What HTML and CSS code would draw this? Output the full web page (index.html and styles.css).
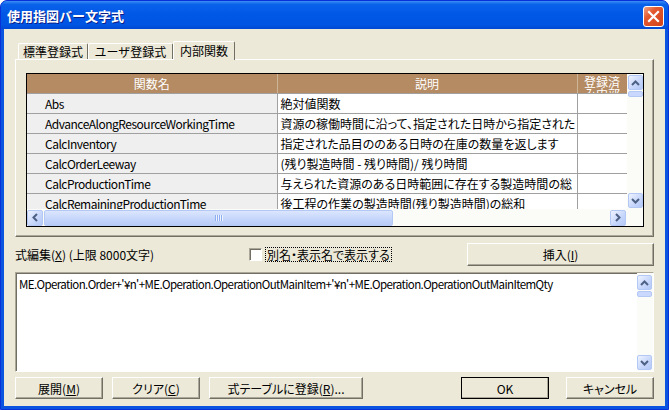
FILE: index.html
```html
<!DOCTYPE html>
<html lang="ja">
<head>
    <meta charset="UTF-8">
    <title>使用指図バー文字式</title>
    <link rel="stylesheet" href="styles.css">
</head>
<body>

<div class="window">
    <div class="titlebar">
        <span class="title">使用指図バー文字式</span>
        <span class="close-btn">
            <svg width="13" height="13" viewBox="0 0 13 13"><path d="M2 2 L11 11 M11 2 L2 11" stroke="#fff" stroke-width="2.2" stroke-linecap="square"/></svg>
        </span>
    </div>

    <div class="client">
        <div class="tabs">
            <div class="tab tab-std">標準登録式</div>
            <div class="tab tab-user">ユーザ登録式</div>
            <div class="tab active">内部関数</div>
        </div>

        <div class="tab-panel">
            <div class="grid">
                <div class="grid-top">
                    <div class="grid-view">
                        <table class="func-table">
                            <colgroup>
                                <col class="c-name">
                                <col class="c-desc">
                                <col class="c-reg">
                            </colgroup>
                            <tr>
                                <th>関数名</th>
                                <th>説明</th>
                                <th class="th-reg"><div class="wrap">登録済み内部</div></th>
                            </tr>
                            <tr><td class="name">Abs</td><td>絶対値関数</td><td></td></tr>
                            <tr><td class="name">AdvanceAlongResourceWorkingTime</td><td>資源の稼働時間に沿って、指定された日時から指定された</td><td></td></tr>
                            <tr><td class="name">CalcInventory</td><td>指定された品目ののある日時の在庫の数量を返します</td><td></td></tr>
                            <tr><td class="name">CalcOrderLeeway</td><td>(残り製造時間 - 残り時間)/ 残り時間</td><td></td></tr>
                            <tr><td class="name">CalcProductionTime</td><td>与えられた資源のある日時範囲に存在する製造時間の総</td><td></td></tr>
                            <tr><td class="name">CalcRemainingProductionTime</td><td>後工程の作業の製造時間(残り製造時間)の総和</td><td></td></tr>
                        </table>
                    </div>
                    <div class="vscroll">
                        <div class="sb-btn"><svg width="9" height="6" viewBox="0 0 9 6"><path d="M1 5 L4.5 1.5 L8 5" fill="none" stroke="#4d6185" stroke-width="2"/></svg></div>
                        <div class="sb-thumb-v"></div>
                        <div class="sb-track"></div>
                        <div class="sb-btn"><svg width="9" height="6" viewBox="0 0 9 6"><path d="M1 1 L4.5 4.5 L8 1" fill="none" stroke="#4d6185" stroke-width="2"/></svg></div>
                    </div>
                </div>
                <div class="hscroll">
                    <div class="sb-btn"><svg width="6" height="9" viewBox="0 0 6 9"><path d="M5 1 L1.5 4.5 L5 8" fill="none" stroke="#4d6185" stroke-width="2"/></svg></div>
                    <div class="sb-thumb-h"><span class="grip"></span></div>
                    <div class="sb-track"></div>
                    <div class="sb-btn"><svg width="6" height="9" viewBox="0 0 6 9"><path d="M1 1 L4.5 4.5 L1 8" fill="none" stroke="#4d6185" stroke-width="2"/></svg></div>
                    <div class="sb-corner"></div>
                </div>
            </div>
        </div>

        <div class="edit-row">
            <span class="edit-label">式編集(<u>X</u>) (上限 8000文字)</span>
            <span class="check"></span>
            <span class="check-label">別名・表示名で表示する</span>
            <span class="btn btn-insert">挿入(<u>I</u>)</span>
        </div>

        <div class="editor">
            <div class="editor-text">ME.Operation.Order+'¥n'+ME.Operation.OperationOutMainItem+'¥n'+ME.Operation.OperationOutMainItemQty</div>
            <div class="vscroll editor-scroll">
                <div class="sb-btn"><svg width="9" height="6" viewBox="0 0 9 6"><path d="M1 5 L4.5 1.5 L8 5" fill="none" stroke="#4d6185" stroke-width="2"/></svg></div>
                <div class="sb-thumb-v"></div>
                <div class="sb-track"></div>
                <div class="sb-btn"><svg width="9" height="6" viewBox="0 0 9 6"><path d="M1 1 L4.5 4.5 L8 1" fill="none" stroke="#4d6185" stroke-width="2"/></svg></div>
            </div>
        </div>

        <div class="button-row">
            <span class="btn btn-small">展開(<u>M</u>)</span>
            <span class="btn btn-small">クリア(<u>C</u>)</span>
            <span class="btn btn-wide">式テーブルに登録(<u>R</u>)...</span>
            <span class="btn btn-small btn-default">OK</span>
            <span class="btn btn-small">キャンセル</span>
        </div>
    </div>
</div>

</body>
</html>
```

FILE: styles.css
```css
body {
    margin: 0;
    padding: 0;
    background: #fff;
    font-family: "Noto Sans CJK JP", sans-serif;
    font-size: 12px;
    font-feature-settings: "palt";
    color: #000;
}
.window {
    width: 669px;
    height: 410px;
    box-sizing: border-box;
    background: #0a54e0;
    border: 1px solid #0831d9;
    border-radius: 7px 7px 0 0;
    overflow: hidden;
    display: flex;
    flex-direction: column;
}
.titlebar {
    height: 28px;
    display: flex;
    align-items: center;
    justify-content: space-between;
    padding: 0 4px 0 6px;
    background: linear-gradient(to bottom, #3d8ef5 0%, #0a62ea 12%, #0058e6 45%, #0055e2 85%, #0049d4 100%);
}
.title {
    color: #fff;
    font-weight: bold;
    font-size: 13px;
    font-feature-settings: normal;
    text-shadow: 1px 1px 0 #0a1e8a;
}
.close-btn {
    width: 19px;
    height: 19px;
    border: 1px solid #fff;
    border-radius: 3px;
    background: linear-gradient(135deg, #f0a487 0%, #e3592f 35%, #d2421a 100%);
    display: flex;
    align-items: center;
    justify-content: center;
    margin-top: 2px;
}
.client {
    margin: 0 3px 3px 3px;
    flex: 1;
    background: #ece9d8;
    padding: 12px 11px 0 11px;
}

/* tabs */
.tabs {
    display: flex;
    align-items: flex-end;
    height: 18px;
    padding-left: 3px;
    position: relative;
    z-index: 1;
}
.tab {
    height: 16px;
    box-sizing: border-box;
    border-top: 1px solid #fff;
    border-left: 1px solid #fff;
    border-right: 1px solid #716f64;
    border-radius: 2px 2px 0 0;
    text-align: center;
    line-height: 14px;
    padding-top: 1px;
    font-feature-settings: normal;
}
.tab-std {
    width: 70px;
}
.tab-user {
    width: 85px;
}
.tab.active {
    width: 62px;
    height: 19px;
    margin-bottom: -1px;
    background: #ece9d8;
    line-height: 15px;
}
.tab-panel {
    height: 178px;
    box-sizing: border-box;
    border-top: 1px solid #fff;
    border-left: 1px solid #fff;
    border-right: 1px solid #716f64;
    border-bottom: 1px solid #716f64;
    box-shadow: inset -1px -1px 0 #aca899;
    padding: 13px 0 0 10px;
}
.grid {
    width: 618px;
    height: 154px;
    box-sizing: border-box;
    border: 1px solid #000;
    background: #fff;
}
.grid-top {
    display: flex;
    height: 135px;
}
.grid-view {
    width: 600px;
    height: 135px;
    overflow: hidden;
}
.func-table {
    border-collapse: collapse;
    table-layout: fixed;
    width: 600px;
}
.c-name {
    width: 250px;
}
.c-desc {
    width: 300px;
}
.c-reg {
    width: 50px;
}
.func-table th {
    height: 19px;
    padding: 0;
    background: #b48b63;
    color: #fff;
    font-weight: normal;
    border-right: 1px solid #cdb597;
    border-bottom: 1px solid #a0a0a0;
    text-align: center;
    line-height: 19px;
}
.th-reg .wrap {
    height: 19px;
    overflow: hidden;
    line-height: 12px;
    padding: 2px 3px 0 3px;
    box-sizing: border-box;
    white-space: normal;
    font-feature-settings: normal;
}
.func-table td {
    height: 19px;
    padding: 0 0 0 3px;
    border-right: 1px solid #a0a0a0;
    border-bottom: 1px solid #a0a0a0;
    white-space: nowrap;
    overflow: hidden;
    line-height: 19px;
    background: #fff;
}
.func-table td.name {
    padding-left: 18px;
    background: #efefef;
    letter-spacing: -0.5px;
}

/* scrollbars */
.vscroll {
    width: 16px;
    display: flex;
    flex-direction: column;
    align-items: center;
    background: #fbfbf8;
    padding: 1px 0;
    box-sizing: border-box;
}
.sb-btn {
    width: 15px;
    height: 15px;
    flex-shrink: 0;
    box-sizing: border-box;
    border: 1px solid #b4c8f6;
    border-radius: 2px;
    background: linear-gradient(135deg, #eef3fe 0%, #c6d6fb 60%, #b4c9f6 100%);
    display: flex;
    align-items: center;
    justify-content: center;
}
.sb-thumb-v {
    width: 15px;
    height: 6px;
    margin-top: 1px;
    box-sizing: border-box;
    border: 1px solid #b4c8f6;
    border-radius: 2px;
    background: #c9d8fc;
}
.sb-track {
    flex: 1;
}
.hscroll {
    height: 17px;
    display: flex;
    align-items: center;
    background: #fbfbf8;
}
.hscroll .sb-btn {
    height: 16px;
    width: 16px;
}
.sb-thumb-h {
    width: 349px;
    height: 16px;
    margin-left: 1px;
    box-sizing: border-box;
    border: 1px solid #b4c8f6;
    border-radius: 2px;
    background: linear-gradient(to bottom, #dce6fd 0%, #c4d5fb 60%, #b8cbf7 100%);
    display: flex;
    align-items: center;
    justify-content: center;
}
.grip {
    width: 8px;
    height: 6px;
    background: repeating-linear-gradient(to right, #8eaef3 0, #8eaef3 1px, #eef3fe 1px, #eef3fe 2px);
}
.sb-corner {
    width: 17px;
    height: 17px;
    background: #fbfbf8;
}

/* edit row */
.edit-row {
    display: flex;
    align-items: center;
    height: 23px;
    margin-top: 6px;
}
.edit-label {
    width: 234px;
}
.check {
    width: 13px;
    height: 13px;
    box-sizing: border-box;
    border: 1px solid;
    border-color: #aca899 #fff #fff #aca899;
    box-shadow: inset 1px 1px 0 #716f64;
    background: #fff;
    margin-right: 3px;
}
.check-label {
    border: 1px dotted #000;
    line-height: 13px;
    padding: 0 1px;
}
.btn {
    height: 22px;
    box-sizing: border-box;
    border: 1px solid;
    border-color: #fff #716f64 #716f64 #fff;
    box-shadow: inset -1px -1px 0 #aca899;
    background: #ece9d8;
    display: flex;
    align-items: center;
    justify-content: center;
}
.btn-insert {
    width: 187px;
    height: 23px;
    margin-left: auto;
}

/* editor */
.editor {
    height: 100px;
    margin-top: 6px;
    box-sizing: border-box;
    border: 1px solid;
    border-color: #aca899 #fff #fff #aca899;
    box-shadow: inset 1px 1px 0 #716f64;
    background: #fff;
    display: flex;
}
.editor-text {
    flex: 1;
    padding: 3px 0 0 3px;
    font-size: 11.5px;
    letter-spacing: -0.6px;
    line-height: 16px;
    white-space: nowrap;
    overflow: hidden;
}
.editor-scroll {
    padding: 2px 1px 1px 0;
}

/* buttons */
.button-row {
    display: flex;
    margin-top: 5px;
}
.btn-small {
    width: 88px;
    margin-right: 9px;
}
.btn-wide {
    width: 154px;
}
.btn-default {
    margin-left: auto;
    margin-right: 17px;
    outline: 1px solid #000;
    outline-offset: -1px;
}
.button-row .btn:last-child {
    margin-right: 0;
}
```
